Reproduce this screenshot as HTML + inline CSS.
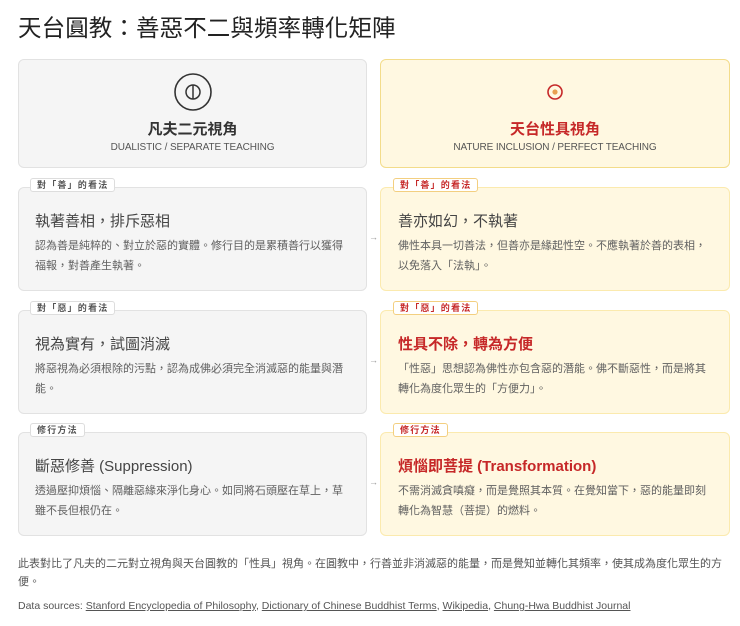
<!DOCTYPE html>
<html><head><meta charset="utf-8"><style>
*{margin:0;padding:0;box-sizing:border-box}
body{width:740px;height:626px;background:#fff;font-family:"Liberation Sans","Noto Sans CJK TC",sans-serif;color:#333;position:relative;overflow:hidden}
.a{position:absolute}
h1{position:absolute;left:18px;top:9px;font-size:23.5px;font-weight:400;color:#222;letter-spacing:0.1px}
.hd{position:absolute;top:59px;height:109px;border-radius:6px;text-align:center}
.l{left:18px;width:349px;background:#f5f5f5;border:1px solid #e2e2e2}
.r{left:380px;width:350px;background:#fff8e1;border:1px solid #f3dc8a}
.hd .t{position:absolute;left:0;right:0;top:58px;font-size:15px;font-weight:700}
.hd .s{position:absolute;left:0;right:0;top:82px;font-size:10px;letter-spacing:-0.1px;color:#555}
.c{position:absolute;height:104px;border-radius:6px;padding:0 16px}
.c.l{background:#f5f5f5;border:1px solid #e2e2e2}
.c.r{background:#fff8e1;border:1px solid #fbeaae}
.c .h{position:absolute;left:16px;top:22px;font-size:15px;color:#444}
.c.r .h{left:17px}
.c .b{position:absolute;left:16px;right:14px;top:48px;font-size:11px;line-height:20px;color:#606060}
.c.r .b{left:17px}
.c .red{color:#c62828;font-weight:700}
.tag{position:absolute;height:14px;font-size:9px;line-height:12px;padding:0 6px;border-radius:3px;background:#fff;border:1px solid #ddd;color:#555;font-weight:700;letter-spacing:1.2px}
.tag.rt{border-color:#f3cf80;color:#c62828}
.arr{position:absolute;left:369px;font-size:9px;color:#999}
.ft{position:absolute;left:18px;top:555px;width:712px;font-size:11px;line-height:18px;color:#555}
.src{position:absolute;left:18px;top:600px;font-size:10.5px;color:#555}
.src u{color:#555}
</style></head><body>
<h1>天台圓教：善惡不二與頻率轉化矩陣</h1>

<div class="hd l">
<svg class="a" style="left:155px;top:13px" width="38" height="38" viewBox="0 0 38 38"><circle cx="19" cy="19" r="18" fill="none" stroke="#333" stroke-width="1.6"/><circle cx="19" cy="19" r="7" fill="none" stroke="#333" stroke-width="1.5"/><line x1="19" y1="12" x2="19" y2="26" stroke="#333" stroke-width="1.5"/></svg>
<div class="t" style="color:#333">凡夫二元視角</div>
<div class="s">DUALISTIC / SEPARATE TEACHING</div>
</div>
<div class="hd r">
<svg class="a" style="left:164px;top:22px" width="20" height="20" viewBox="0 0 20 20"><circle cx="10" cy="10" r="7" fill="none" stroke="#c62828" stroke-width="1.6"/><circle cx="10" cy="10" r="2.6" fill="#e8a050"/></svg>
<div class="t" style="color:#c62828">天台性具視角</div>
<div class="s">NATURE INCLUSION / PERFECT TEACHING</div>
</div>

<div class="c l" style="left:18px;top:187px"><div class="h">執著善相，排斥惡相</div><div class="b">認為善是純粹的、對立於惡的實體。修行目的是累積善行以獲得福報，對善產生執著。</div></div>
<div class="tag" style="left:30px;top:178px">對「善」的看法</div>
<div class="arr" style="top:232px">→</div>
<div class="c r" style="left:380px;top:187px"><div class="h">善亦如幻，不執著</div><div class="b">佛性本具一切善法，但善亦是緣起性空。不應執著於善的表相，以免落入「法執」。</div></div>
<div class="tag rt" style="left:393px;top:178px">對「善」的看法</div>

<div class="c l" style="left:18px;top:310px"><div class="h">視為實有，試圖消滅</div><div class="b">將惡視為必須根除的污點，認為成佛必須完全消滅惡的能量與潛能。</div></div>
<div class="tag" style="left:30px;top:301px">對「惡」的看法</div>
<div class="arr" style="top:355px">→</div>
<div class="c r" style="left:380px;top:310px"><div class="h red">性具不除，轉為方便</div><div class="b">「性惡」思想認為佛性亦包含惡的潛能。佛不斷惡性，而是將其轉化為度化眾生的「方便力」。</div></div>
<div class="tag rt" style="left:393px;top:301px">對「惡」的看法</div>

<div class="c l" style="left:18px;top:432px"><div class="h">斷惡修善 (Suppression)</div><div class="b">透過壓抑煩惱、隔離惡緣來淨化身心。如同將石頭壓在草上，草雖不長但根仍在。</div></div>
<div class="tag" style="left:30px;top:423px">修行方法</div>
<div class="arr" style="top:477px">→</div>
<div class="c r" style="left:380px;top:432px"><div class="h red">煩惱即菩提 (Transformation)</div><div class="b">不需消滅貪嗔癡，而是覺照其本質。在覺知當下，惡的能量即刻轉化為智慧（菩提）的燃料。</div></div>
<div class="tag rt" style="left:393px;top:423px">修行方法</div>

<div class="ft">此表對比了凡夫的二元對立視角與天台圓教的「性具」視角。在圓教中，行善並非消滅惡的能量，而是覺知並轉化其頻率，使其成為度化眾生的方便。</div>
<div class="src">Data sources: <u>Stanford Encyclopedia of Philosophy</u>, <u>Dictionary of Chinese Buddhist Terms</u>, <u>Wikipedia</u>, <u>Chung-Hwa Buddhist Journal</u></div>
</body></html>
